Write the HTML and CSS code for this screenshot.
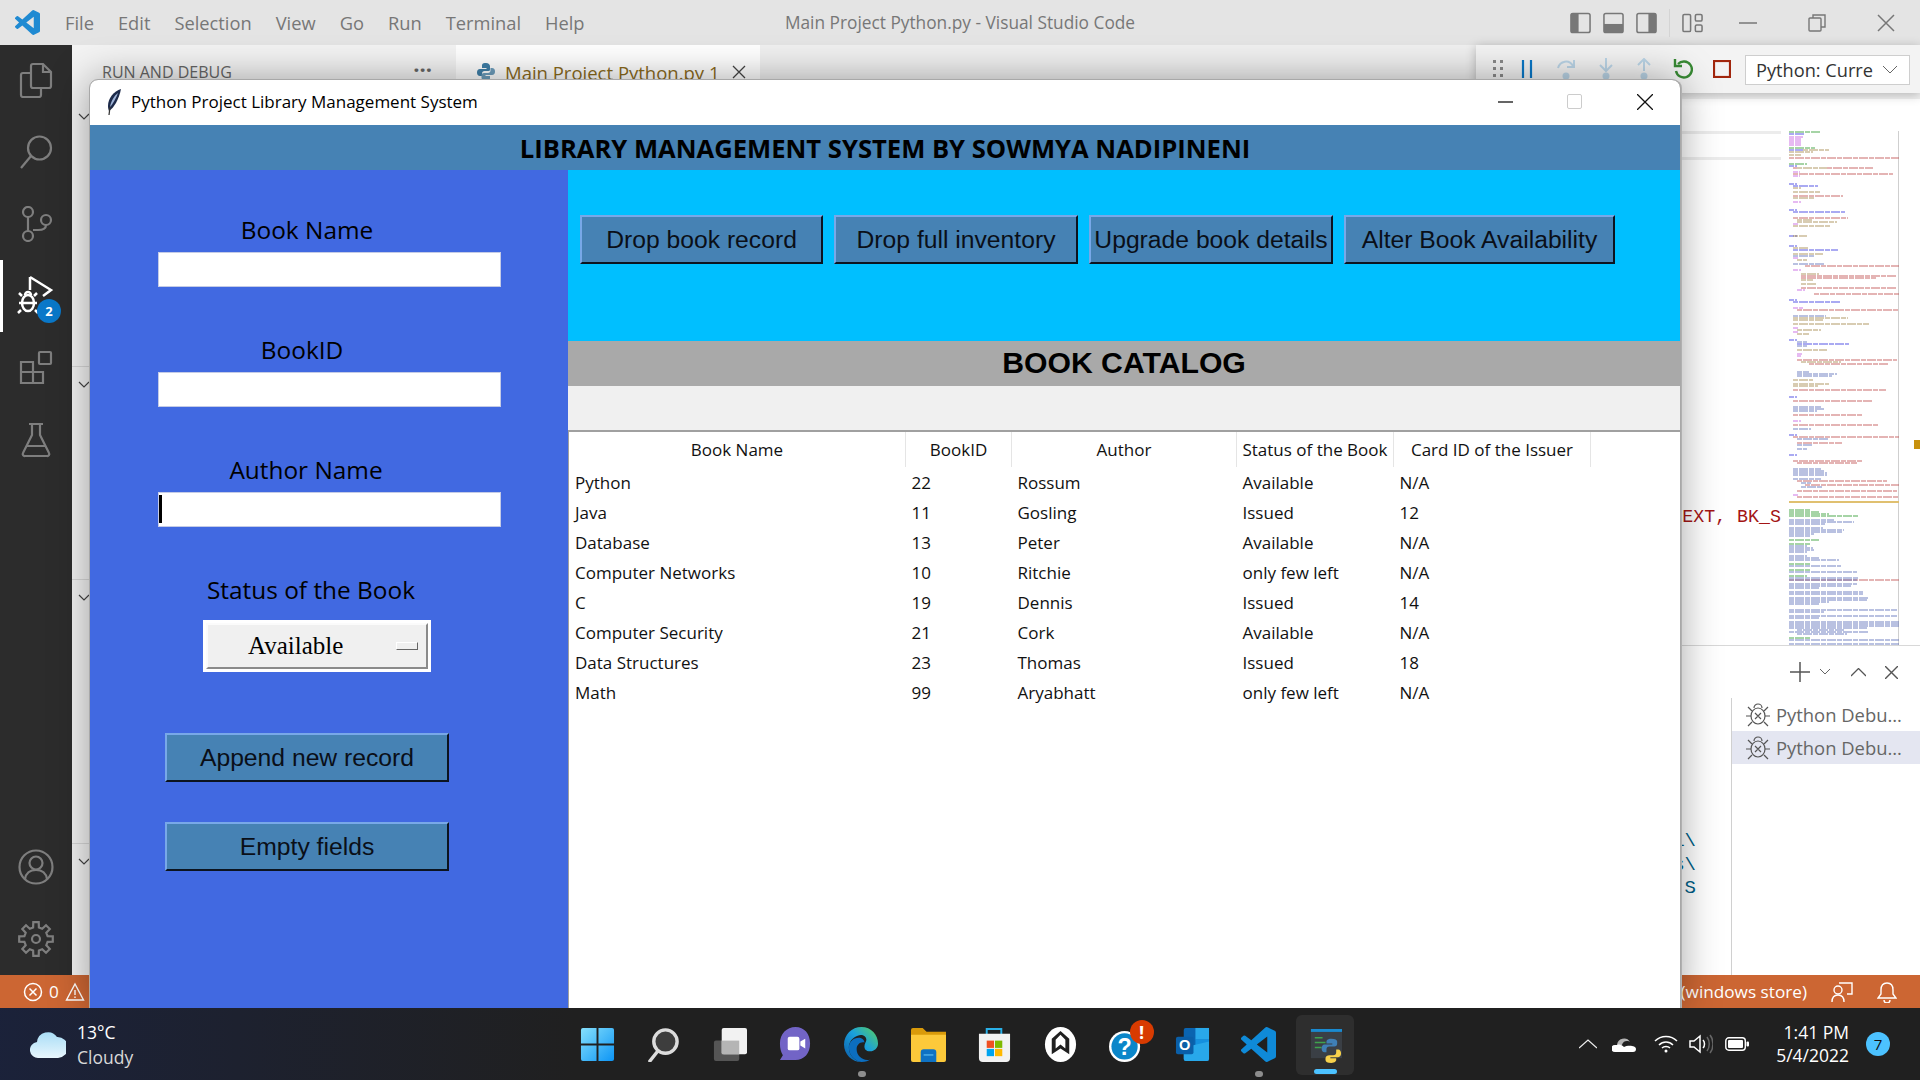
FILE: index.html
```html
<!DOCTYPE html>
<html lang="en">
<head>
    <meta charset="UTF-8">
    <title>Main Project Python.py - Visual Studio Code</title>
    <link rel="stylesheet" href="styles.css">
</head>
<body>

<div class="desktop">

    <!-- VS Code behind the tk window -->
    <div class="vscode">
        <header class="titlebar">
            <svg class="vs-logo" viewBox="0 0 24 24"><path fill="#1f8ad2" d="M23.15 2.587L18.21.21a1.494 1.494 0 0 0-1.705.29l-9.46 8.63-4.12-3.128a.999.999 0 0 0-1.276.057L.327 7.261A1 1 0 0 0 .326 8.74L3.899 12 .326 15.26a1 1 0 0 0 .001 1.479L1.65 17.94a.999.999 0 0 0 1.276.057l4.12-3.128 9.46 8.63a1.492 1.492 0 0 0 1.704.29l4.942-2.377A1.5 1.5 0 0 0 24 20.06V3.939a1.5 1.5 0 0 0-.85-1.352zm-5.146 14.861L10.826 12l7.178-5.448v10.896z"/></svg>
            <nav class="menu">
                <span>File</span><span>Edit</span><span>Selection</span><span>View</span><span>Go</span><span>Run</span><span>Terminal</span><span>Help</span>
            </nav>
            <div class="title-text">Main Project Python.py - Visual Studio Code</div>
            <div class="layout-icons">
                <svg width="21" height="22" viewBox="0 0 22 22"><rect x="1" y="1" width="20" height="20" rx="2" fill="none" stroke="#777" stroke-width="1.6"/><rect x="1" y="1" width="8" height="20" fill="#777"/></svg>
                <svg width="21" height="22" viewBox="0 0 22 22"><rect x="1" y="1" width="20" height="20" rx="2" fill="none" stroke="#777" stroke-width="1.6"/><rect x="1" y="12" width="20" height="9" fill="#777"/></svg>
                <svg width="21" height="22" viewBox="0 0 22 22"><rect x="1" y="1" width="20" height="20" rx="2" fill="none" stroke="#777" stroke-width="1.6"/><rect x="13" y="1" width="8" height="20" fill="#777"/></svg>
                <i class="layout-sep"></i>
                <svg width="21" height="20" viewBox="0 0 22 20" fill="none" stroke="#777" stroke-width="1.6"><rect x="1" y="1" width="8" height="18" rx="1.5"/><rect x="14" y="1" width="7" height="7" rx="1.5"/><rect x="14" y="12" width="7" height="7" rx="1.5"/></svg>
            </div>
            <div class="win-controls">
                <svg width="18" height="18" viewBox="0 0 18 18"><path d="M0 9h18" stroke="#777" stroke-width="1.5"/></svg>
                <svg width="18" height="18" viewBox="0 0 18 18" fill="none" stroke="#777" stroke-width="1.4"><rect x="1" y="4" width="12" height="13" rx="1"/><path d="M5 4V1h12v12h-4"/></svg>
                <svg width="18" height="18" viewBox="0 0 18 18"><path d="M1 1l16 16M17 1L1 17" stroke="#777" stroke-width="1.5"/></svg>
            </div>
        </header>

        <div class="workbench">
            <aside class="activity">
                <div class="act-top">
                    <svg class="act-icon" viewBox="0 0 36 36"><path d="M15 2h10l8 8v14a2 2 0 0 1-2 2H15a2 2 0 0 1-2-2V4a2 2 0 0 1 2-2zM25 2v8h8"/><path d="M13 11H5a2 2 0 0 0-2 2v20a2 2 0 0 0 2 2h16a2 2 0 0 0 2-2v-7"/></svg>
                    <svg class="act-icon" viewBox="0 0 36 36"><circle cx="21.500" cy="14" r="11.500"/><path d="M13 22L3 34"/></svg>
                    <svg class="act-icon" viewBox="0 0 36 36"><circle cx="10" cy="6" r="5"/><circle cx="10" cy="30" r="5"/><circle cx="28" cy="14" r="5"/><path d="M10 11v14M28 19c0 4-3 5-8 5h-5"/></svg>
                    <div class="act-debug">
                        <svg class="debug-svg" viewBox="0 0 44 44"><path d="M14 3l21 13-8 6" fill="none" stroke="#fff" stroke-width="2.500"/><path d="M14 3v13" stroke="#fff" stroke-width="2.500"/><ellipse cx="12" cy="29" rx="6" ry="8" fill="none" stroke="#fff" stroke-width="2.500"/><path d="M6 22l-3-3M18 22l3-3M3 29h18M5 36l-3 3M19 36l3 3M9 21a3 3 0 0 1 6 0" fill="none" stroke="#fff" stroke-width="2.500"/></svg>
                        <span class="act-badge">2</span>
                    </div>
                    <svg class="act-icon" viewBox="0 0 36 36"><path d="M3 12h12v21H3zM3 22h22v11H15M15 12v21"/><rect x="21" y="2" width="12" height="12" rx="1"/></svg>
                    <svg class="act-icon" viewBox="0 0 36 36"><path d="M11 2h14M14 2v11L5 31a2 2 0 0 0 2 3h22a2 2 0 0 0 2-3L22 13V2M9 24h18"/></svg>
                </div>
                <div class="act-bottom">
                    <svg class="act-icon" viewBox="0 0 36 36"><circle cx="18" cy="18" r="16.500"/><circle cx="18" cy="14" r="6.500"/><path d="M7 30c1-6 5-9 11-9s10 3 11 9"/></svg>
                    <svg class="act-icon" viewBox="0 0 36 36"><polygon points="15.1,6.4 15.3,1.2 20.7,1.2 20.9,6.4 24.2,7.7 28,4.3 31.800,8 28.300,11.800 29.600,15.100 34.800,15.300 34.800,20.700 29.600,20.900 28.300,24.200 31.800,28 28,31.800 24.200,28.300 20.900,29.600 20.700,34.800 15.300,34.800 15.100,29.600 11.800,28.300 8,31.800 4.300,28 7.700,24.200 6.400,20.900 1.200,20.700 1.200,15.300 6.400,15.100 7.700,11.800 4.300,8 8,4.300 11.800,7.700"/><circle cx="18" cy="18" r="4"/></svg>
                </div>
            </aside>

            <section class="sidebar">
                <div class="side-head"><span>RUN AND DEBUG</span><span class="side-dots">&middot;&middot;&middot;</span></div>
                <div class="side-section side-first"><svg class="chev" viewBox="0 0 12 8"><path d="M1 1l5 5 5-5"/></svg></div>
                <div class="side-section"><svg class="chev" viewBox="0 0 12 8"><path d="M1 1l5 5 5-5"/></svg></div>
                <div class="side-section side-third"><svg class="chev" viewBox="0 0 12 8"><path d="M1 1l5 5 5-5"/></svg></div>
                <div class="side-section"><svg class="chev" viewBox="0 0 12 8"><path d="M1 1l5 5 5-5"/></svg></div>
            </section>

            <section class="editor">
                <div class="tabs">
                    <div class="tab">
                        <svg width="20" height="20" viewBox="0 0 20 20"><path fill="#3f7fa8" d="M10 1c-4 0-4 1.500-4 3v2h4.500v1H4C2 7 1 8.500 1 10.500S2 14 4 14h2v-2.500C6 10 7 9 8.500 9h4C14 9 14 8 14 7V4c0-1.500-1.500-3-4-3z"/><path fill="#6e9ebd" d="M10 19c4 0 4-1.500 4-3v-2H9.500v-1H16c2 0 3-1.500 3-3.500S18 6 16 6h-1.500v2.500c0 1.500-1 2.500-2.500 2.500H8c-1.500 0-2.500 1-2.500 2v3c0 1.500 2 3 4.500 3z"/></svg>
                        <span class="tab-name">Main Project Python.py 1</span>
                        <svg width="14" height="14" viewBox="0 0 14 14"><path d="M1 1l12 12M13 1L1 13" stroke="#444" stroke-width="1.300"/></svg>
                    </div>
                </div>
                <div class="breadcrumb"></div>
                <div class="editor-body">
                    <div class="code">
                        <div class="line-hl"></div>
                        <div class="code-line">EXT, BK_S</div>
                    </div>
                    <div class="minimap">
                        <svg class="minimap-svg" viewBox="0 0 110 514" fill="none">
                            <path stroke="#2f9a2f" d="M0 1h32M0 17h26M0 33h18M0 379h22M0 381h30M0 383h40M0 385h70M0 409h30M0 413h22M0 433h22M0 439h22M0 445h18M0 507h22"/>
                            <path stroke="#c65fe0" d="M0 6h14M0 8h12M0 10h12M0 12h12M0 14h12M4 41h7M4 45h7M4 71h8M4 93h5M4 127h5M4 139h8M8 159h8M4 177h10M4 197h5M4 201h5M8 223h5M8 225h4M4 290h8M4 364h5"/>
                            <path stroke="#3a3ae0" d="M0 3h15M0 35h8M0 53h8M0 79h8M0 105h8M0 115h8M0 169h8M0 209h8M0 266h8M0 304h8M0 324h8M4 55h25M4 81h52M4 119h45M4 171h48M8 213h52M0 19h14"/>
                            <path stroke="#a58a4c" d="M14 19h26M0 21h24M0 24h12M8 37h30M4 57h8M4 61h27M4 67h22M8 89h15M8 91h40M4 95h37M4 105h14M4 117h15M4 123h30M8 129h10M12 143h18M12 149h12M12 153h16M4 187h55M4 189h30M4 193h76M8 199h24M8 203h12M8 219h30M12 231h40M4 249h20M4 253h36M4 255h25"/>
                            <path stroke="#c05050" d="M0 27h110M4 37h4M38 37h46M4 43h100M4 65h50M4 87h55M16 135h95M12 145h96M12 147h75M12 157h95M25 163h85M8 179h102M8 229h100M20 233h80M4 259h93M4 270h80M4 284h70M4 294h85M4 306h106M8 312h45M4 330h70M8 332h60M8 350h90M16 354h94M8 360h100M8 366h102M0 449h110"/>
                            <path stroke="#5c6fb8" d="M4 125h22M4 133h32M4 185h33M8 211h10M8 215h10M8 241h12M8 243h40M8 245h35M4 276h28M4 278h32M4 280h24M4 298h18M8 308h32M8 314h15M8 318h10M4 338h28M4 340h32M4 342h34M4 344h34M4 348h28M12 352h10M12 356h22M0 389h45M0 391h65M0 393h36M0 397h34M0 399h55M0 401h53M0 403h25M0 405h22M0 415h18M0 417h24M0 419h25M0 421h18M0 425h18M0 427h30M0 429h50M0 435h52M0 441h68M0 447h70M0 449h68M0 453h68M0 455h62M0 457h30M0 461h74M0 463h74M0 467h80M0 469h78M0 471h40M0 473h30M0 479h108M0 481h35M0 485h108M0 487h30M0 491h110M0 493h110M0 495h110M0 497h78M8 499h48M0 501h80M8 503h50M0 509h110M0 513h110"/>
                            <path class="minimap-sel" stroke="#e0c070" d="M0 371h110"/>
                        </svg>
                    </div>
                    <div class="overview"><i class="overview-mark"></i></div>
                </div>

                <div class="panel">
                    <div class="panel-actions">
                        <svg width="20" height="20" viewBox="0 0 20 20"><path d="M10 0v20M0 10h20" stroke="#555" stroke-width="1.500"/></svg>
                        <svg class="pa-chev" width="10" height="6" viewBox="0 0 10 6" fill="none"><path d="M0 0l5 5 5-5" stroke="#666"/></svg>
                        <svg class="pa-up" width="15" height="9" viewBox="0 0 15 9" fill="none"><path d="M0 8l7.500-7.500L15 8" stroke="#555" stroke-width="1.300"/></svg>
                        <svg class="pa-close" width="13" height="13" viewBox="0 0 13 13"><path d="M0 0l13 13M13 0L0 13" stroke="#555" stroke-width="1.400"/></svg>
                    </div>
                    <div class="panel-body">
                        <div class="terminal">
                            <div>1\</div>
                            <div>s\</div>
                            <div>S</div>
                        </div>
                        <div class="term-list">
                            <div class="term-row">
                                <svg class="bug" viewBox="0 0 24 24"><ellipse cx="12" cy="13" rx="7" ry="8"/><path d="M8 5a4 4 0 0 1 8 0M0 13h5M19 13h5M2 4l4 4M22 4l-4 4M2 23l4-4M22 23l-4-4M9 10l6 6M15 10l-6 6"/></svg>
                                <span>Python Debu...</span>
                            </div>
                            <div class="term-row term-active">
                                <svg class="bug" viewBox="0 0 24 24"><ellipse cx="12" cy="13" rx="7" ry="8"/><path d="M8 5a4 4 0 0 1 8 0M0 13h5M19 13h5M2 4l4 4M22 4l-4 4M2 23l4-4M22 23l-4-4M9 10l6 6M15 10l-6 6"/></svg>
                                <span>Python Debu...</span>
                            </div>
                        </div>
                    </div>
                </div>
            </section>
        </div>

        <footer class="statusbar">
            <div class="status-left">
                <svg width="20" height="20" viewBox="0 0 20 20" fill="none" stroke="#fff" stroke-width="1.500"><circle cx="10" cy="10" r="8.500"/><path d="M6.500 6.500l7 7M13.500 6.500l-7 7"/></svg>
                <span>0</span>
                <svg width="20" height="20" viewBox="0 0 20 20" fill="none" stroke="#fff" stroke-width="1.400"><path d="M10 2l8.500 16h-17zM10 8v5M10 14.500v1.500"/></svg>
            </div>
            <div class="status-right">
                <span class="status-env">(windows store)</span>
                <svg width="22" height="22" viewBox="0 0 22 22" fill="none" stroke="#fff" stroke-width="1.400"><path d="M8 2h13v11h-5M1 21c0-5 2-7 6-7s6 2 6 7"/><circle cx="7" cy="9" r="4"/></svg>
                <svg width="20" height="22" viewBox="0 0 20 22" fill="none" stroke="#fff" stroke-width="1.400"><path d="M10 2c-4 0-6 3-6 7v4l-3 4h18l-3-4V9c0-4-2-7-6-7zM7 19a3 3 0 0 0 6 0"/></svg>
            </div>
        </footer>
    </div>

    <!-- floating debug toolbar -->
    <div class="debug-bar">
        <svg width="10" height="18" viewBox="0 0 10 18" fill="#8a8a8a"><rect width="3" height="3"/><rect x="7" width="3" height="3"/><rect y="7" width="3" height="3"/><rect x="7" y="7" width="3" height="3"/><rect y="14" width="3" height="3"/><rect x="7" y="14" width="3" height="3"/></svg>
        <svg width="12" height="18" viewBox="0 0 12 18"><path d="M2 0v18M10 0v18" stroke="#0a78c8" stroke-width="2.200"/></svg>
        <svg width="20" height="22" viewBox="0 0 20 22" fill="none" stroke="#bcd6e8" stroke-width="2"><path d="M2 10c2-7 11-9 15-2M18 2v7h-7"/><circle cx="10" cy="18" r="2.500" fill="#bcd6e8"/></svg>
        <svg width="16" height="22" viewBox="0 0 16 22" fill="none" stroke="#bcd6e8" stroke-width="2"><path d="M8 0v12M2 7l6 6 6-6"/><circle cx="8" cy="18" r="2.500" fill="#bcd6e8"/></svg>
        <svg width="16" height="22" viewBox="0 0 16 22" fill="none" stroke="#bcd6e8" stroke-width="2"><path d="M8 13V1M2 7l6-6 6 6"/><circle cx="8" cy="18" r="2.500" fill="#bcd6e8"/></svg>
        <svg width="20" height="22" viewBox="0 0 20 22" fill="none" stroke="#388a34" stroke-width="2.400"><path d="M5 6a8 8 0 1 1-2 7M2 1v7h7"/></svg>
        <svg width="18" height="18" viewBox="0 0 18 18" fill="none" stroke="#a1260d" stroke-width="2.200"><rect x="1" y="1" width="16" height="16"/></svg>
        <div class="debug-select"><span>Python: Curre</span><svg width="14" height="8" viewBox="0 0 14 8" fill="none"><path d="M0 0l7 7 7-7" stroke="#666"/></svg></div>
    </div>

    <!-- the tkinter window -->
    <div class="tk-window">
        <div class="tk-title">
            <svg class="feather" viewBox="0 0 16 26"><path fill="#1c2a4a" d="M15 0C8 2 2 9 2 17c0 2 .5 4 1 5 5-3 10-12 12-22z"/><path fill="#9fb4d8" d="M12 4C8 7 5 12 4 18c3-3 6-9 8-14z"/><path stroke="#333" stroke-width="1.200" d="M4 18l-1 8"/></svg>
            <span class="tk-title-text">Python Project Library Management System</span>
            <div class="tk-controls">
                <svg width="15" height="2" viewBox="0 0 15 2"><path d="M0 1h15" stroke="#111" stroke-width="1.300"/></svg>
                <svg class="tk-max" width="15" height="15" viewBox="0 0 15 15"><rect x=".5" y=".5" width="14" height="14" rx="1.500" fill="none" stroke="#ccc"/></svg>
                <svg width="16" height="16" viewBox="0 0 16 16"><path d="M0 0l16 16M16 0L0 16" stroke="#111" stroke-width="1.300"/></svg>
            </div>
        </div>
        <div class="tk-heading">LIBRARY MANAGEMENT SYSTEM BY SOWMYA NADIPINENI</div>
        <div class="tk-main">
            <div class="left-panel">
                <div class="field-label">Book Name</div>
                <div class="text-entry"></div>
                <div class="field-label label-id">BookID</div>
                <div class="text-entry"></div>
                <div class="field-label label-author">Author Name</div>
                <div class="text-entry"><i class="caret"></i></div>
                <div class="field-label label-status">Status of the Book</div>
                <div class="option-menu">
                    <div class="option-inner">
                        <span class="option-text">Available</span>
                        <i class="option-indicator"></i>
                    </div>
                </div>
                <div class="tk-btn left-btn btn-append">Append new record</div>
                <div class="tk-btn left-btn btn-empty">Empty fields</div>
            </div>
            <div class="right-panel">
                <div class="action-band">
                    <div class="tk-btn btn-drop">Drop book record</div>
                    <div class="tk-btn btn-full">Drop full inventory</div>
                    <div class="tk-btn btn-full">Upgrade book details</div>
                    <div class="tk-btn btn-alter">Alter Book Availability</div>
                </div>
                <div class="catalog-band">BOOK CATALOG</div>
                <div class="catalog-strip"></div>
                <div class="table-wrap">
                    <table class="catalog">
                        <thead>
                            <tr>
                                <th class="col-name">Book Name</th>
                                <th class="col-id">BookID</th>
                                <th class="col-author">Author</th>
                                <th class="col-status">Status of the Book</th>
                                <th class="col-card">Card ID of the Issuer</th>
                            </tr>
                        </thead>
                        <tbody>
                            <tr><td>Python</td><td>22</td><td>Rossum</td><td>Available</td><td>N/A</td></tr>
                            <tr><td>Java</td><td>11</td><td>Gosling</td><td>Issued</td><td>12</td></tr>
                            <tr><td>Database</td><td>13</td><td>Peter</td><td>Available</td><td>N/A</td></tr>
                            <tr><td>Computer Networks</td><td>10</td><td>Ritchie</td><td>only few left</td><td>N/A</td></tr>
                            <tr><td>C</td><td>19</td><td>Dennis</td><td>Issued</td><td>14</td></tr>
                            <tr><td>Computer Security</td><td>21</td><td>Cork</td><td>Available</td><td>N/A</td></tr>
                            <tr><td>Data Structures</td><td>23</td><td>Thomas</td><td>Issued</td><td>18</td></tr>
                            <tr><td>Math</td><td>99</td><td>Aryabhatt</td><td>only few left</td><td>N/A</td></tr>
                        </tbody>
                    </table>
                </div>
            </div>
        </div>
    </div>

    <!-- windows taskbar -->
    <footer class="taskbar">
        <div class="weather">
            <svg width="36" height="30" viewBox="0 0 36 30"><defs><linearGradient id="cloud" x1="0" y1="0" x2="0" y2="1"><stop offset="0" stop-color="#a9ddf6"/><stop offset="1" stop-color="#e8f6fd"/></linearGradient></defs><path fill="url(#cloud)" d="M9 29a8 8 0 0 1-2-16 11 11 0 0 1 20-5 9 9 0 0 1 1 21z"/></svg>
            <div class="weather-text"><span>13°C</span><span class="weather-sub">Cloudy</span></div>
        </div>
        <div class="task-icons">
            <div class="task-item">
                <svg class="task-svg" viewBox="0 0 36 36"><defs><linearGradient id="win" x1="0" y1="0" x2="1" y2="1"><stop offset="0" stop-color="#86e0fc"/><stop offset="1" stop-color="#0d95f5"/></linearGradient></defs><path fill="url(#win)" d="M1 3a2 2 0 0 1 2-2h14v16H1zM19 1h14a2 2 0 0 1 2 2v14H19zM1 19h16v16H3a2 2 0 0 1-2-2zM19 19h16v14a2 2 0 0 1-2 2H19z"/></svg>
            </div>
            <div class="task-item">
                <svg class="task-svg" viewBox="0 0 36 36"><circle cx="20" cy="15" r="12" fill="#3d3d3d" stroke="#dcdcdc" stroke-width="3.500"/><path d="M12 25L4 35" stroke="#dcdcdc" stroke-width="3.500" stroke-linecap="round"/></svg>
            </div>
            <div class="task-item">
                <svg class="task-svg" viewBox="0 0 36 36"><rect x="2" y="14" width="26" height="21" rx="2" fill="#555"/><rect x="10" y="1" width="26" height="27" rx="2" fill="#f2f2f2"/><rect x="10" y="14" width="18" height="14" fill="#b5b5b5"/></svg>
            </div>
            <div class="task-item">
                <svg class="task-svg" viewBox="0 0 36 36"><path fill="#7264c6" d="M18 0c9 0 15 7 15 17s-6 17-15 17H2l3-5C3 26 2 22 2 17 2 7 9 0 18 0z"/><rect x="10" y="10" width="12" height="14" rx="2" fill="#fff"/><path fill="#fff" d="M23 15l5-3v10l-5-3z"/></svg>
            </div>
            <div class="task-item">
                <svg class="task-svg" viewBox="0 0 36 36"><defs><linearGradient id="edge" x1="0" y1="1" x2="1" y2="0"><stop offset="0" stop-color="#0b5aa8"/><stop offset=".55" stop-color="#1aa0dc"/><stop offset="1" stop-color="#59d25c"/></linearGradient></defs><path fill="url(#edge)" d="M18 0c10 0 17 8 17 17 0 5-4 8-8 8-5 0-6-3-6-5 0-3 2-5 2-7 0-4-5-6-9-4C9 11 5 15 5 21c0 8 6 14 13 15C8 36 0 28 0 18 0 8 8 0 18 0z"/><path fill="#0c6ec0" d="M5 21c0-6 5-10 10-10 3 0 6 2 6 5-4-1-8 2-8 7 0 6 5 11 11 11 2 0 3 0 4-1-3 2-6 3-10 3-7-1-13-7-13-15z"/></svg>
                <i class="task-dot"></i>
            </div>
            <div class="task-item">
                <svg class="task-svg" viewBox="0 0 36 36"><path fill="#d99a0a" d="M0 3a2 2 0 0 1 2-2h10l4 4h20v8H0z"/><path fill="#fcc93a" d="M0 8h36v26a2 2 0 0 1-2 2H2a2 2 0 0 1-2-2z"/><path fill="#0e72c4" d="M10 26a3 3 0 0 1 3-3h10a3 3 0 0 1 3 3v10H10z"/><path fill="#4fb0e8" d="M13 28h10v1.500H13z"/></svg>
            </div>
            <div class="task-item">
                <svg class="task-svg" viewBox="0 0 36 36"><path d="M10 8V2h15v6" fill="none" stroke="#29b0e8" stroke-width="2"/><path fill="#f2f2f2" d="M2 7h32v25a4 4 0 0 1-4 4H6a4 4 0 0 1-4-4z"/><rect x="10" y="14" width="7.500" height="7.500" fill="#f05022"/><rect x="18.500" y="14" width="7.500" height="7.500" fill="#7fba00"/><rect x="10" y="22.500" width="7.500" height="7.500" fill="#00a4ef"/><rect x="18.500" y="22.500" width="7.500" height="7.500" fill="#ffb900"/></svg>
            </div>
            <div class="task-item">
                <svg class="task-svg" viewBox="0 0 36 36"><ellipse cx="18" cy="18" rx="16" ry="18" fill="#fff"/><path d="M18 4l-9 8v16l9-6 9 6V12z" fill="#202020"/><path d="M18 8l-5 5v9l5-4 5 4v-9z" fill="#fff"/></svg>
            </div>
            <div class="task-item">
                <svg class="task-svg" viewBox="0 0 36 36"><circle cx="16" cy="20" r="16" fill="#fff"/><circle cx="16" cy="20" r="13.500" fill="#0b86c9"/><text class="help-q" x="16" y="29" text-anchor="middle">?</text></svg>
                <span class="help-badge">!</span>
            </div>
            <div class="task-item">
                <svg class="task-svg" viewBox="0 0 36 36"><rect x="9" y="1" width="26" height="34" rx="2" fill="#0a64b0"/><rect x="21" y="1" width="14" height="12" fill="#29a8ea"/><rect x="21" y="13" width="14" height="11" fill="#1490df"/><path d="M9 21l26-6v18a2 2 0 0 1-2 2H11a2 2 0 0 1-2-2z" fill="#28a8ea"/><rect x="1" y="10" width="18" height="18" rx="2" fill="#0a5fa8"/><text class="outlook-o" x="10" y="24" text-anchor="middle">O</text></svg>
            </div>
            <div class="task-item">
                <svg class="task-svg" viewBox="0 0 24 24"><path fill="#0f8ad8" d="M23.15 2.587L18.21.21a1.494 1.494 0 0 0-1.705.29l-9.46 8.63-4.12-3.128a.999.999 0 0 0-1.276.057L.327 7.261A1 1 0 0 0 .326 8.74L3.899 12 .326 15.26a1 1 0 0 0 .001 1.479L1.65 17.94a.999.999 0 0 0 1.276.057l4.12-3.128 9.46 8.63a1.492 1.492 0 0 0 1.704.29l4.942-2.377A1.5 1.5 0 0 0 24 20.06V3.939a1.5 1.500 0 0 0-.85-1.352zm-5.146 14.861L10.826 12l7.178-5.448v10.896z"/></svg>
                <i class="task-dot"></i>
            </div>
            <div class="task-item task-active">
                <svg class="task-svg" viewBox="0 0 36 36"><rect x="3" y="1" width="32" height="30" fill="#3a3f45"/><rect x="3" y="1" width="32" height="3" fill="#1a8ad0"/><path d="M7 10h8M7 15h11M7 20h7" stroke="#3fa34d" stroke-width="1.500"/><path fill="#3f7fb5" d="M24 11c-4 0-5 2-5 3v2h6v1h-8c-2 0-3 2-3 4s1 4 3 4h2v-3c0-2 1-3 3-3h5c2 0 3-1 3-3v-2c0-2-2-3-6-3z"/><path fill="#f7d14c" d="M24 36c4 0 5-2 5-3v-2h-6v-1h8c2 0 3-2 3-4s-1-4-3-4h-2v3c0 2-1 3-3 3h-4c-2 0-4 1-4 3v2c0 2 2 3 6 3z"/></svg>
                <i class="task-bar"></i>
            </div>
        </div>
        <div class="tray">
            <svg width="18" height="10" viewBox="0 0 18 10" fill="none"><path d="M0 9l9-8 9 8" stroke="#eee" stroke-width="1.300"/></svg>
            <svg class="tray-cloud" width="24" height="16" viewBox="0 0 24 16"><path fill="#b5b5b5" d="M5 9a7 7 0 0 1 13-3 5 5 0 0 0-8 3z"/><path fill="#fff" d="M3 16a3.500 3.500 0 0 1 0-7h2c3-1 5 0 7 2 3-2 12-2 12 2 0 2-1 3-3 3z"/></svg>
            <svg class="tray-wifi" width="24" height="18" viewBox="0 0 24 18" fill="none" stroke="#fff" stroke-width="1.500"><path d="M1 6c6-6 16-6 22 0M5 10c4-4 10-4 14 0M8 13c2-2 6-2 8 0"/><circle cx="12" cy="16" r="1.500" fill="#fff" stroke="none"/></svg>
            <svg class="tray-vol" width="24" height="20" viewBox="0 0 24 20" fill="none" stroke="#fff" stroke-width="1.500"><path d="M1 7h4l6-5v16l-6-5H1z"/><path d="M14 6c2 2 2 6 0 8"/><path d="M18 3c3 4 3 10 0 14M21 1c4 5 4 13 0 18" stroke="#666"/></svg>
            <svg class="tray-bat" width="24" height="14" viewBox="0 0 24 14"><rect x=".8" y=".8" width="19.500" height="12.400" rx="3" fill="none" stroke="#fff" stroke-width="1.400"/><rect x="3" y="3" width="15" height="8" rx="1" fill="#fff"/><rect x="21.500" y="4.500" width="2.500" height="5" rx="1" fill="#fff"/></svg>
            <div class="clock"><span>1:41 PM</span><span>5/4/2022</span></div>
            <span class="notif">7</span>
        </div>
    </footer>
</div>

</body>
</html>
```

FILE: styles.css
```css
html, body {
    margin: 0;
    padding: 0;
}
body {
    font-family: "Open Sans", "Liberation Sans", sans-serif;
    overflow: hidden;
}
.desktop {
    position: relative;
    width: 1920px;
    height: 1080px;
    overflow: hidden;
    display: flex;
    flex-direction: column;
}

/* VS Code */
.vscode {
    height: 1008px;
    display: flex;
    flex-direction: column;
}
.titlebar {
    height: 45px;
    background-color: #e4e4e4;
    display: flex;
    align-items: center;
    position: relative;
    color: #777;
    font-size: 18.300px;
}
.vs-logo {
    width: 25px;
    height: 25px;
    margin-left: 15px;
}
.menu {
    display: flex;
    gap: 24px;
    margin-left: 25px;
}
.title-text {
    position: absolute;
    left: 0;
    right: 0;
    text-align: center;
    font-size: 17.300px;
    pointer-events: none;
}
.layout-icons {
    margin-left: auto;
    display: flex;
    align-items: center;
    gap: 12px;
}
.layout-sep {
    width: 1px;
    height: 28px;
    background-color: #d4d4d4;
}
.win-controls {
    display: flex;
    align-items: center;
    gap: 51px;
    margin-left: 36px;
    margin-right: 25px;
}
.workbench {
    flex: 1;
    display: flex;
    min-height: 0;
}
.activity {
    width: 72px;
    background-color: #2c2c2c;
    display: flex;
    flex-direction: column;
    justify-content: space-between;
    align-items: center;
}
.act-top {
    display: flex;
    flex-direction: column;
    align-items: center;
    gap: 36px;
    padding-top: 17px;
    width: 100%;
}
.act-bottom {
    display: flex;
    flex-direction: column;
    align-items: center;
    gap: 36px;
    padding-bottom: 18px;
}
.act-icon {
    width: 36px;
    height: 36px;
    fill: none;
    stroke: #7e7e7e;
    stroke-width: 2.200;
}
.act-debug {
    width: 100%;
    height: 72px;
    margin: -18px 0;
    box-sizing: border-box;
    border-left: 3px solid #fff;
    position: relative;
}
.debug-svg {
    width: 44px;
    height: 44px;
    margin: 14px 0 0 13px;
}
.act-badge {
    position: absolute;
    left: 34px;
    top: 39px;
    width: 24px;
    height: 24px;
    border-radius: 50%;
    background-color: #0a78c9;
    color: #fff;
    font-size: 13px;
    font-weight: 700;
    line-height: 24px;
    text-align: center;
}
.sidebar {
    width: 384px;
    background-color: #f3f3f3;
}
.side-head {
    height: 54px;
    display: flex;
    justify-content: space-between;
    padding: 16px 24px 0 30px;
    box-sizing: border-box;
    font-size: 16px;
    color: #666;
}
.side-dots {
    font-size: 22px;
    line-height: 16px;
    font-weight: 700;
}
.side-section {
    border-top: 1px solid #d8d8d8;
    height: 213px;
    padding: 14px 0 0 6px;
    box-sizing: border-box;
}
.side-first {
    border-top: none;
    height: 267px;
}
.side-third {
    height: 264px;
}
.chev {
    width: 12px;
    height: 8px;
    fill: none;
    stroke: #444;
    stroke-width: 1.200;
    display: block;
}
.editor {
    flex: 1;
    display: flex;
    flex-direction: column;
    min-width: 0;
    background-color: #fff;
}
.tabs {
    height: 54px;
    background-color: #f0f0f0;
    display: flex;
}
.tab {
    width: 304px;
    background-color: #fff;
    display: flex;
    align-items: center;
    gap: 9px;
    padding: 0 14px 0 20px;
    box-sizing: border-box;
    height: 54px;
}
.tab-name {
    color: #8a6a1c;
    font-size: 18.500px;
    white-space: nowrap;
    margin-right: 3px;
}
.breadcrumb {
    height: 32px;
}
.editor-body {
    height: 514px;
    display: flex;
    background-color: #fff;
}
.code {
    flex: 1;
}
.line-hl {
    height: 29px;
    box-sizing: border-box;
    border-top: 3px solid #ececec;
    border-bottom: 3px solid #ececec;
}
.code-line {
    margin-top: 345px;
    font-family: "Liberation Mono", monospace;
    font-size: 18.300px;
    line-height: 24px;
    color: #a31515;
    text-align: right;
}
.minimap {
    width: 118px;
    box-sizing: border-box;
    padding-left: 8px;
    border-right: 1px solid #cfcfcf;
}
.minimap-svg {
    width: 110px;
    height: 514px;
    display: block;
}
.minimap-svg path {
    stroke-width: 1.200;
    stroke-dasharray: 5 1 9 1;
    opacity: .85;
}
.minimap-svg .minimap-sel {
    stroke-width: 2;
    stroke-dasharray: none;
    opacity: 1;
}
.overview {
    width: 21px;
    padding-top: 309px;
    box-sizing: border-box;
}
.overview-mark {
    display: block;
    width: 6px;
    height: 9px;
    margin-left: 15px;
    background-color: #c8920e;
}
.panel {
    flex: 1;
    border-top: 1px solid #d8d8d8;
    display: flex;
    flex-direction: column;
    min-height: 0;
}
.panel-actions {
    height: 52px;
    display: flex;
    justify-content: flex-end;
    align-items: center;
    padding-right: 22px;
}
.pa-chev {
    margin-left: 10px;
}
.pa-up {
    margin-left: 21px;
}
.pa-close {
    margin-left: 19px;
}
.panel-body {
    flex: 1;
    display: flex;
}
.terminal {
    flex: 1;
    padding: 132px 35px 0 0;
    font-family: "Liberation Mono", monospace;
    font-size: 19px;
    line-height: 23.500px;
    color: #005f87;
    text-align: right;
}
.term-list {
    width: 188px;
    border-left: 1px solid #d0d0d0;
    font-size: 18.400px;
    color: #666;
}
.term-row {
    height: 33px;
    display: flex;
    align-items: center;
    gap: 6px;
    padding-left: 14px;
}
.term-active {
    background-color: #e4e6f1;
}
.bug {
    width: 24px;
    height: 24px;
    fill: none;
    stroke: #555;
    stroke-width: 1.200;
}
.statusbar {
    height: 33px;
    background-color: #cc6633;
    color: #fff;
    display: flex;
    justify-content: space-between;
    align-items: center;
    font-size: 17.200px;
}
.status-left {
    display: flex;
    align-items: center;
    gap: 6px;
    margin-left: 23px;
}
.status-right {
    display: flex;
    align-items: center;
    margin-right: 23px;
}
.status-right svg:last-child {
    margin-left: 24px;
}
.status-env {
    margin-right: 24px;
}

/* floating debug toolbar */
.debug-bar {
    position: absolute;
    left: 1476px;
    top: 45px;
    width: 444px;
    height: 48px;
    background-color: #f3f3f3;
    box-shadow: 0 2px 10px rgba(0, 0, 0, .25);
    display: flex;
    align-items: center;
    padding-left: 17px;
    box-sizing: border-box;
}
.debug-bar > svg:nth-child(2) {
    margin-left: 18px;
}
.debug-bar > svg:nth-child(3) {
    margin-left: 23px;
}
.debug-bar > svg:nth-child(4),
.debug-bar > svg:nth-child(5) {
    margin-left: 22px;
}
.debug-bar > svg:nth-child(6) {
    margin-left: 21px;
}
.debug-bar > svg:nth-child(7) {
    margin-left: 20px;
}
.debug-select {
    margin-left: 14px;
    width: 165px;
    height: 30px;
    margin-top: 1px;
    box-sizing: border-box;
    background-color: #fff;
    border: 1px solid #cecece;
    display: flex;
    align-items: center;
    justify-content: space-between;
    padding: 0 12px 0 10px;
    font-size: 18.200px;
    color: #333;
    white-space: nowrap;
}

/* tk window */
.tk-window {
    position: absolute;
    left: 90px;
    top: 80px;
    width: 1590px;
    height: 928px;
    background-color: #fff;
    border-radius: 8px 8px 0 0;
    outline: 1px solid #a8a8a8;
    box-shadow: 2px 0 0 #b0b0b0, 0 0 40px rgba(0, 0, 0, .38);
    display: flex;
    flex-direction: column;
}
.tk-title {
    height: 45px;
    padding-bottom: 2px;
    box-sizing: border-box;
    display: flex;
    align-items: center;
    color: #000;
    font-size: 17px;
    flex-shrink: 0;
}
.feather {
    width: 16px;
    height: 26px;
    margin-left: 16px;
}
.tk-title-text {
    margin-left: 9px;
}
.tk-controls {
    margin-left: auto;
    display: flex;
    align-items: center;
    margin-right: 27px;
}
.tk-max {
    margin: 0 55px 0 54px;
}
.tk-heading {
    height: 45px;
    background-color: #4682b4;
    color: #000;
    font-weight: 700;
    font-size: 25.600px;
    line-height: 47px;
    text-align: center;
    flex-shrink: 0;
}
.tk-main {
    flex: 1;
    display: flex;
    min-height: 0;
}
.left-panel {
    width: 478px;
    background-color: #4169e1;
    padding-top: 42px;
    box-sizing: border-box;
}
.field-label {
    width: 434px;
    height: 36px;
    line-height: 36px;
    text-align: center;
    font-size: 24.400px;
    color: #000;
}
.label-id {
    width: 424px;
    margin-top: 45px;
}
.label-author {
    width: 432px;
    margin-top: 45px;
}
.label-status {
    width: 442px;
    margin-top: 45px;
}
.text-entry {
    width: 343px;
    height: 35px;
    margin: 4px 0 0 68px;
    box-sizing: border-box;
    background-color: #fff;
    border: 1px solid #c4cbe6;
}
.caret {
    display: block;
    width: 3px;
    height: 28px;
    margin: 2px 0 0 0;
    background-color: #000;
}
.option-menu {
    width: 228px;
    height: 52px;
    margin: 12px 0 0 113px;
    box-sizing: border-box;
    border: 3px solid #fff;
}
.option-inner {
    height: 100%;
    box-sizing: border-box;
    background-color: #f0f0f0;
    border: 2px solid;
    border-color: #fbfbfb #8a8a8a #8a8a8a #fbfbfb;
    display: flex;
    align-items: center;
    justify-content: space-between;
    padding: 0 8px 0 40px;
}
.option-text {
    font-family: "Liberation Serif", serif;
    font-size: 25px;
    color: #000;
}
.option-indicator {
    width: 22px;
    height: 8px;
    box-sizing: border-box;
    background-color: #f0f0f0;
    border: 1px solid;
    border-color: #fff #666 #666 #fff;
}
.tk-btn {
    height: 49px;
    box-sizing: border-box;
    background-color: #4682b4;
    border: 2px solid;
    border-color: #78a8e8 #0c1420 #0c1420 #78a8e8;
    display: flex;
    align-items: center;
    justify-content: center;
    font-family: "Liberation Sans", Arial, sans-serif;
    font-size: 24.700px;
    color: #0a0f18;
    white-space: nowrap;
}
.left-btn {
    width: 284px;
    margin-left: 75px;
}
.btn-append {
    margin-top: 61px;
}
.btn-empty {
    margin-top: 40px;
}
.right-panel {
    flex: 1;
    min-width: 0;
    display: flex;
    flex-direction: column;
}
.action-band {
    height: 171px;
    background-color: #00bfff;
    display: flex;
    gap: 11px;
    padding: 45px 0 0 12px;
    box-sizing: border-box;
}
.btn-drop {
    width: 243px;
}
.btn-full {
    width: 244px;
}
.btn-alter {
    width: 271px;
}
.catalog-band {
    height: 45px;
    background-color: #a9a9a9;
    color: #000;
    font-family: "Liberation Sans", Arial, sans-serif;
    font-weight: 700;
    font-size: 30.200px;
    line-height: 43px;
    text-align: center;
}
.catalog-strip {
    height: 46px;
    background-color: #f0f0f0;
    border-bottom: 2px solid #a0a0a0;
    box-sizing: border-box;
}
.table-wrap {
    flex: 1;
    background-color: #fff;
    border-left: 1px solid #a0a0a0;
}

/* Tabela */
.catalog {
    table-layout: fixed;
    width: 1017px;
    border-collapse: collapse;
    font-size: 17px;
    color: #111;
}
.catalog th {
    height: 35px;
    padding: 0;
    font-weight: 400;
    border-right: 1px solid #e5e5e5;
    text-align: center;
}
.catalog td {
    height: 30px;
    padding: 0 0 0 6px;
    white-space: nowrap;
}
.col-name {
    width: 336px;
}
.col-id {
    width: 105px;
}
.col-author {
    width: 224px;
}
.col-status {
    width: 156px;
}
.col-card {
    width: 196px;
}

/* taskbar */
.taskbar {
    height: 72px;
    position: relative;
    z-index: 2;
    color: #fff;
    background: linear-gradient(90deg, rgba(26, 34, 62, .85), rgba(32, 32, 32, 0) 30%), #202020;
    display: flex;
    align-items: center;
}
.weather {
    width: 564px;
    display: flex;
    align-items: center;
    gap: 11px;
    padding-left: 30px;
    box-sizing: border-box;
}
.weather-text {
    display: flex;
    flex-direction: column;
    font-size: 17.500px;
    line-height: 25px;
    padding-top: 2px;
}
.weather-sub {
    color: #d8d8d8;
}
.task-icons {
    display: flex;
    height: 100%;
}
.task-item {
    width: 66.200px;
    height: 100%;
    position: relative;
    display: flex;
    align-items: center;
    justify-content: center;
}
.task-svg {
    width: 35px;
    height: 35px;
    display: block;
}
.task-dot {
    position: absolute;
    left: 29px;
    top: 63px;
    width: 8px;
    height: 6px;
    border-radius: 3px;
    background-color: #8d8d8d;
}
.task-active {
    background-color: #2e2e2e;
    width: 58px;
    height: 60px;
    margin: 7px 4px 0;
    border-radius: 6px;
}
.task-bar {
    position: absolute;
    left: 18px;
    top: 54px;
    width: 23px;
    height: 5px;
    border-radius: 3px;
    background-color: #4cc2ff;
}
.help-q {
    font-family: "Liberation Sans", sans-serif;
    font-size: 24px;
    font-weight: 700;
    fill: #fff;
}
.outlook-o {
    font-family: "Liberation Sans", sans-serif;
    font-size: 15px;
    font-weight: 700;
    fill: #fff;
}
.help-badge {
    position: absolute;
    left: 36px;
    top: 12px;
    width: 24px;
    height: 24px;
    border-radius: 50%;
    background-color: #d83b01;
    color: #fff;
    font-weight: 700;
    font-size: 18px;
    line-height: 24px;
    text-align: center;
}
.tray {
    flex: 1;
    display: flex;
    align-items: center;
    justify-content: flex-end;
    padding-right: 30px;
}
.tray-cloud {
    margin-left: 15px;
}
.tray-wifi {
    margin-left: 18px;
}
.tray-vol {
    margin-left: 11px;
}
.tray-bat {
    margin-left: 12px;
}
.clock {
    display: flex;
    flex-direction: column;
    align-items: flex-end;
    margin-left: 27px;
    font-size: 17.500px;
    line-height: 23px;
}
.notif {
    width: 24px;
    height: 24px;
    margin-left: 17px;
    border-radius: 50%;
    background-color: #4cc2ff;
    color: #111;
    font-size: 15px;
    line-height: 24px;
    text-align: center;
}
```
